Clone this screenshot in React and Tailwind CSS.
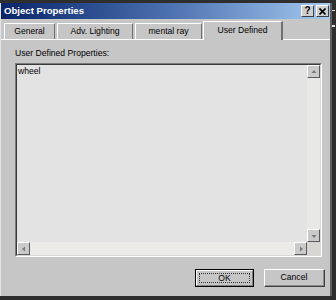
import React from "react";

const font = { fontFamily: '"Liberation Sans", Arial, sans-serif' };

export default function App() {
  return (
    <div
      className="w-[336px] h-[300px] bg-[#2e2e2e] flex overflow-hidden text-black"
      style={font}
    >
      <div className="pt-[3px]">
        <Dialog />
      </div>
      <div className="flex flex-col w-[4px]">
        <div className="mt-[10px] h-[1px] w-[3px] bg-[#d8d8d8]" />
        <div className="mt-[14px] h-[2px] w-[3px] bg-[#e0e0e0]" />
      </div>
    </div>
  );
}

function Dialog() {
  return (
    <div className="w-[332px] h-[293px] bg-[#c6c6c6] border-l border-l-[#e4e4e4] border-r-2 border-r-[#5e5e5e] flex flex-col">
      <TitleBar />
      <Tabs />
      <div className="flex-1 border-t border-t-white flex flex-col">
        <div className="mt-[8px] ml-[14px] text-[8.6px] leading-[10px]">
          User Defined Properties:
        </div>
        <TextBox />
        <div className="mt-[12px] flex justify-end gap-[10px] pr-[5px]">
          <button className="w-[59px] h-[18px] border border-black bg-[#c6c6c6] p-0">
            <div className="h-full border-t border-l border-t-white border-l-white border-r border-b border-r-[#808080] border-b-[#808080] p-[2px]">
              <div className="h-full border border-dotted border-[#333] flex items-center justify-center text-[8.6px]">
                OK
              </div>
            </div>
          </button>
          <button className="w-[61px] h-[18px] border-t border-l border-t-white border-l-white border-r border-b border-r-[#404040] border-b-[#404040] bg-[#c6c6c6] p-0">
            <div className="h-full border-r border-b border-r-[#8a8a8a] border-b-[#8a8a8a] flex items-center justify-center text-[8.6px]">
              Cancel
            </div>
          </button>
        </div>
      </div>
    </div>
  );
}

function TitleBar() {
  return (
    <div className="h-[16px] bg-gradient-to-r from-[#0a246a] via-[#4a6fae] to-[#a6caf0] flex items-center pl-[3px] pr-[1px]">
      <span className="text-white font-bold text-[9.6px] leading-[12px] flex-1">
        Object Properties
      </span>
      <CaptionButton>?</CaptionButton>
      <div className="w-[2px]" />
      <CaptionButton>
        <svg width="7" height="7" viewBox="0 0 7 7">
          <path d="M0.5 0.5 L6.5 6.5 M6.5 0.5 L0.5 6.5" stroke="#000" strokeWidth="1.6" />
        </svg>
      </CaptionButton>
    </div>
  );
}

function CaptionButton({ children }) {
  return (
    <div className="w-[13px] h-[12px] bg-[#cfcfcf] border-t border-l border-t-white border-l-white border-r border-b border-r-[#404040] border-b-[#404040] flex items-center justify-center text-[10px] font-bold leading-none">
      {children}
    </div>
  );
}

function Tabs() {
  const tabs = [
    { label: "General", w: "w-[51px]" },
    { label: "Adv. Lighting", w: "w-[76px]" },
    { label: "mental ray", w: "w-[67px]" },
  ];

  return (
    <div className="mt-[2px] h-[18px] flex items-end pl-[3px] gap-[2px]">
      {tabs.map((tab) => (
        <div
          key={tab.label}
          className={`${tab.w} h-[16px] border-t border-l border-t-white border-l-white border-r border-r-[#707070] flex items-center justify-center text-[8.6px] leading-none pb-[1px]`}
        >
          {tab.label}
        </div>
      ))}
      <div className="w-[80px] h-[19px] -mb-[1px] -ml-[1px] relative bg-[#c6c6c6] border-t border-l border-t-white border-l-white border-r-2 border-r-[#707070] flex items-center justify-center text-[8.6px] leading-none pb-[2px]">
        User Defined
      </div>
    </div>
  );
}

function TextBox() {
  return (
    <div className="mt-[5px] ml-[14px] w-[307px] h-[194px] border-t border-l border-t-[#7a7a7a] border-l-[#7a7a7a] border-b border-r border-b-white border-r-white">
      <div className="h-full border-t border-l border-t-[#3a3a3a] border-l-[#3a3a3a] border-b border-r border-b-[#d6d6d6] border-r-[#d6d6d6] flex flex-col bg-[#e3e3e3]">
        <div className="flex-1 flex">
          <div className="flex-1 pl-[1px] pt-[1px] text-[8.6px] leading-[10px]">
            wheel
          </div>
          <div className="w-[13px] flex flex-col bg-[#e8e8e6]">
            <ScrollButton dir="up" />
            <div className="flex-1" />
            <ScrollButton dir="down" />
          </div>
        </div>
        <div className="h-[13px] flex">
          <ScrollButton dir="left" />
          <div className="flex-1 bg-[#ecebe7]" />
          <ScrollButton dir="right" />
          <div className="w-[13px] bg-[#d8d6d2]" />
        </div>
      </div>
    </div>
  );
}

function ScrollButton({ dir }) {
  const paths = {
    up: "M1.5 5 L4 2 L6.5 5 Z",
    down: "M1.5 3 L4 6 L6.5 3 Z",
    left: "M5 1.5 L2 4 L5 6.5 Z",
    right: "M3 1.5 L6 4 L3 6.5 Z",
  };

  return (
    <div className="w-[13px] h-[13px] bg-[#cacaca] border-t border-l border-t-white border-l-white border-r border-b border-r-[#5a5a5a] border-b-[#5a5a5a] flex items-center justify-center">
      <svg width="8" height="8" viewBox="0 0 8 8">
        <path d={paths[dir]} fill="#7a7a7a" />
      </svg>
    </div>
  );
}
